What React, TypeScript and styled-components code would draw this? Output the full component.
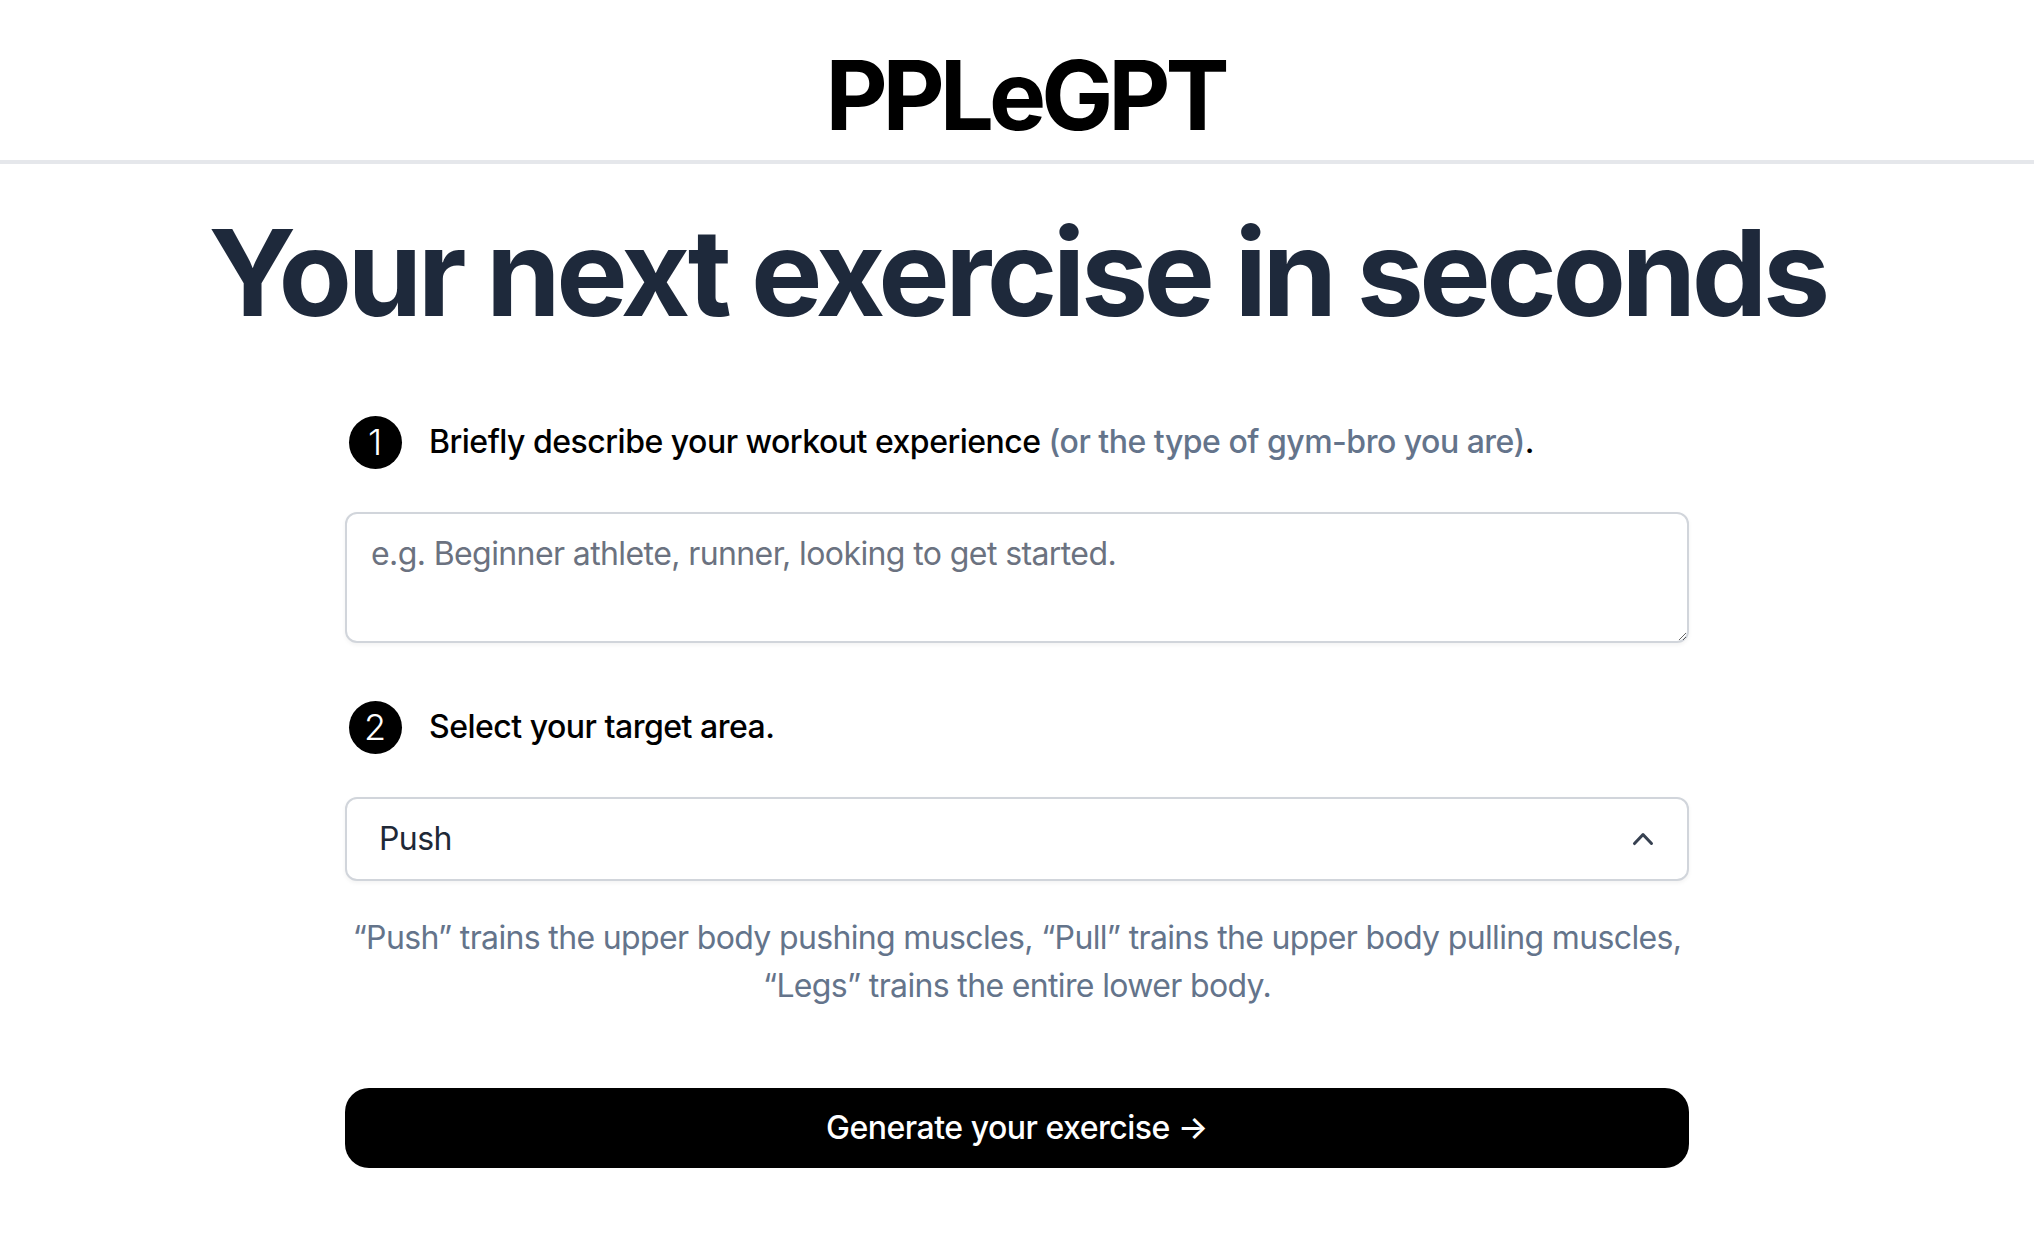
import React from "react";
import styled, { createGlobalStyle } from "styled-components";

const GlobalStyle = createGlobalStyle`
  html, body { margin: 0; padding: 0; background: #ffffff; }
  body { font-family: Inter, "Noto Sans", "Liberation Sans", sans-serif; color: #000; }
  * { box-sizing: border-box; }
`;

const Page = styled.div`
  display: flex;
  flex-direction: column;
  align-items: center;
  width: 100%;
  min-height: 1260px;
`;

const Header = styled.header`
  display: flex;
  justify-content: center;
  align-items: center;
  width: 100%;
  padding: 47px 0 17px;
  border-bottom: 4px solid #e5e7eb;
`;

const Logo = styled.h1`
  margin: 0 0 0 16px;
  font-size: 96px;
  line-height: 96px;
  font-weight: 700;
  letter-spacing: -5px;
  color: #000;
`;

const Main = styled.main`
  display: flex;
  flex-direction: column;
  align-items: center;
  width: 100%;
  text-align: center;
  padding-top: 49px;
`;

const Title = styled.h2`
  margin: 0;
  font-size: 120px;
  line-height: 120px;
  font-weight: 700;
  letter-spacing: -4.5px;
  color: #1e293b;
`;

const Form = styled.div`
  width: 1344px;
  display: flex;
  flex-direction: column;
  margin-top: 79px;
`;

const StepRow = styled.div<{ $mt?: number }>`
  display: flex;
  align-items: center;
  gap: 24px;
  height: 60px;
  margin-top: ${(p) => p.$mt ?? 0}px;
`;

const StepBadge = styled.div`
  width: 60px;
  height: 60px;
  display: flex;
  align-items: center;
  justify-content: center;
  flex-shrink: 0;
`;

const StepCircle = styled.span`
  width: 53px;
  height: 53px;
  border-radius: 50%;
  background: #000;
  color: #fff;
  display: flex;
  align-items: center;
  justify-content: center;
  font-size: 36px;
  font-weight: 300;
  line-height: 1;
`;

const StepText = styled.p`
  margin: 0;
  text-align: left;
  font-size: 32px;
  line-height: 48px;
  font-weight: 500;
  letter-spacing: -0.5px;
  color: #000;
`;

const Muted = styled.span`
  color: #64748b;
`;

const TextArea = styled.textarea`
  display: block;
  width: 100%;
  height: 131px;
  margin-top: 40px;
  padding: 16px 24px;
  border: 2px solid #d1d5db;
  border-radius: 12px;
  box-shadow: 0 2px 4px rgba(0, 0, 0, 0.05);
  font-family: Inter, "Noto Sans", "Liberation Sans", sans-serif;
  font-size: 32px;
  line-height: 48px;
  letter-spacing: -0.6px;
  color: #111827;
  outline: none;
  &::placeholder { color: #6b7280; }
`;

const SelectButton = styled.button`
  display: flex;
  align-items: center;
  justify-content: space-between;
  width: 100%;
  height: 84px;
  margin-top: 40px;
  padding: 0 24px 0 32px;
  background: #fff;
  border: 2px solid #d1d5db;
  border-radius: 12px;
  box-shadow: 0 2px 4px rgba(0, 0, 0, 0.05);
  font-family: Inter, "Noto Sans", "Liberation Sans", sans-serif;
  font-size: 32px;
  line-height: 48px;
  letter-spacing: -0.6px;
  color: #1f2937;
  cursor: pointer;
`;

const Chevron = styled.svg`
  width: 40px;
  height: 40px;
  color: #374151;
`;

const Hint = styled.p`
  margin: 33px 0 0;
  font-size: 32px;
  line-height: 48px;
  letter-spacing: -0.65px;
  color: #64748b;
  text-align: center;
`;

const Generate = styled.button`
  width: 100%;
  height: 80px;
  margin-top: 78px;
  background: #000;
  color: #fff;
  border: none;
  border-radius: 24px;
  font-family: Inter, "Noto Sans", "Liberation Sans", sans-serif;
  font-size: 32px;
  line-height: 48px;
  font-weight: 500;
  letter-spacing: -0.5px;
  cursor: pointer;
`;

export default function App() {
  return (
    <>
      <GlobalStyle />
      <Page>
        <Header>
          <Logo>PPLeGPT</Logo>
        </Header>
        <Main>
          <Title>Your next exercise in seconds</Title>
          <Form>
            <StepRow>
              <StepBadge>
                <StepCircle>1</StepCircle>
              </StepBadge>
              <StepText>
                Briefly describe your workout experience{" "}
                <Muted>(or the type of gym-bro you are)</Muted>.
              </StepText>
            </StepRow>
            <TextArea rows={2} placeholder="e.g. Beginner athlete, runner, looking to get started." />
            <StepRow $mt={54}>
              <StepBadge>
                <StepCircle>2</StepCircle>
              </StepBadge>
              <StepText>Select your target area.</StepText>
            </StepRow>
            <SelectButton type="button">
              <span>Push</span>
              <Chevron viewBox="0 0 20 20" fill="currentColor" aria-hidden="true">
                <path
                  fillRule="evenodd"
                  d="M14.77 12.79a.75.75 0 01-1.06-.02L10 8.832 6.29 12.77a.75.75 0 11-1.08-1.04l4.25-4.5a.75.75 0 011.08 0l4.25 4.5a.75.75 0 01-.02 1.06z"
                  clipRule="evenodd"
                />
              </Chevron>
            </SelectButton>
            <Hint>
              “Push” trains the upper body pushing muscles, “Pull” trains the upper body pulling muscles,
              “Legs” trains the entire lower body.
            </Hint>
            <Generate type="button">Generate your exercise →</Generate>
          </Form>
        </Main>
      </Page>
    </>
  );
}
